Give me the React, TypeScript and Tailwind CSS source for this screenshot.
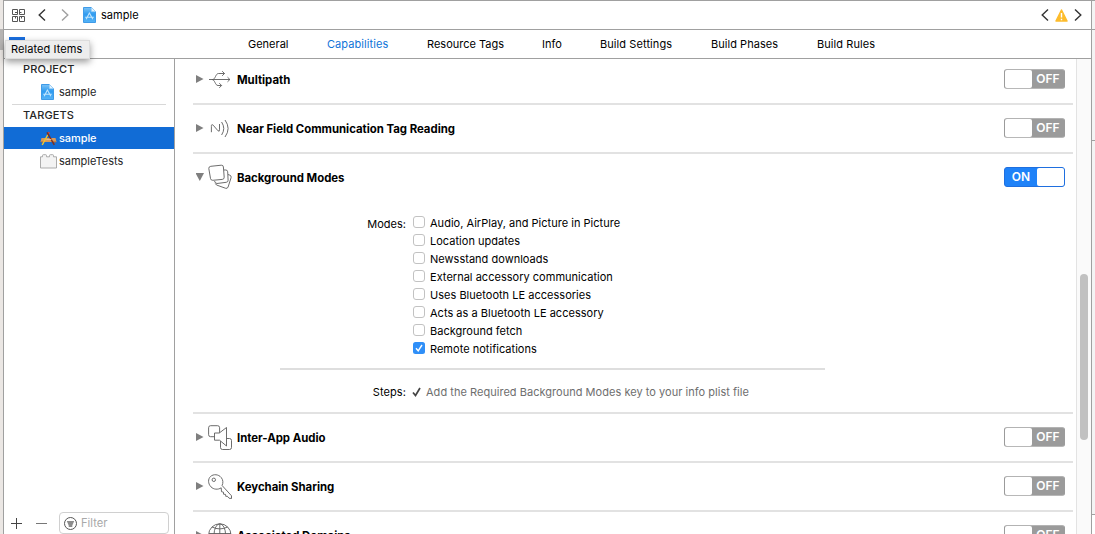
import type { ReactNode } from "react";

const tabs = [
  { label: "General", cls: "w-[79px]" },
  { label: "Capabilities", cls: "w-[100px] text-[#0f74d8] tracking-[0.07px]" },
  { label: "Resource Tags", cls: "w-[115px]" },
  { label: "Info", cls: "w-[58px]" },
  { label: "Build Settings", cls: "w-[111px] tracking-[0.08px]" },
  { label: "Build Phases", cls: "w-[106px] tracking-[0.04px]" },
  { label: "Build Rules", cls: "w-[97px] tracking-[0.08px]" },
];

const modes = [
  "Audio, AirPlay, and Picture in Picture",
  "Location updates",
  "Newsstand downloads",
  "External accessory communication",
  "Uses Bluetooth LE accessories",
  "Acts as a Bluetooth LE accessory",
  "Background fetch",
  "Remote notifications",
];

function DocIcon({ className }: { className?: string }) {
  return (
    <svg className={className} width="13" height="16" viewBox="0 0 13 16">
      <defs>
        <linearGradient id="doc" x1="0" y1="0" x2="0" y2="1">
          <stop offset="0" stopColor="#7cc3f6" />
          <stop offset=".45" stopColor="#2f9bf0" />
          <stop offset="1" stopColor="#56b4f7" />
        </linearGradient>
      </defs>
      <path d="M.5 .5h8l4 4v11H.5z" fill="url(#doc)" stroke="#3f9be8" />
      <path d="M8.500 .5l4 4h-4z" fill="#e3f3fe" stroke="#9fd2f8" strokeWidth=".6" />
      <path d="M6.500 5.800L3.200 12.300M6.300 5.800l3.500 6.500M2.200 10.300h8.600" stroke="#c2e5fd" strokeWidth="1.100" fill="none" />
    </svg>
  );
}

function AppIcon() {
  return (
    <svg width="17" height="15" viewBox="0 0 17 15">
      <path d="M1.500 7h14l1 4H.5z" fill="#d99a5b" />
      <path d="M1 11h3M12 11h4" stroke="#a8663a" strokeWidth="1" />
      <path d="M8.800 2L2.200 14" stroke="#f3c62d" strokeWidth="1.500" />
      <path d="M9.200 1L7.800 3.500" stroke="#d94434" strokeWidth="1.500" />
      <path d="M7 1.300l7.300 12.500" stroke="#7c2f23" strokeWidth="1.500" />
      <path d="M6.400 8.600h5" stroke="#f1c28e" strokeWidth="1" />
    </svg>
  );
}

function TestIcon() {
  return (
    <svg width="17" height="15" viewBox="0 0 17 15">
      <path d="M.5 2.800h2V1.500q0-.8.800-.8h2.400q.8 0 .8.800v1.300h3V1.500q0-.8.800-.8h2.400q.8 0 .8.800v1.300h3v11.200H.5z" fill="#f3f3f3" stroke="#a3a3a3" strokeWidth=".9" />
    </svg>
  );
}

function Glyph({ children }: { children: ReactNode }) {
  return (
    <svg className="ml-[4px] shrink-0" width="24" height="26" viewBox="0 0 24 26" fill="none" stroke="#5c5c5c" strokeWidth=".9" strokeLinejoin="round">
      {children}
    </svg>
  );
}

const glyphs = {
  multipath: (
    <path d="M1 13.500h21M19.500 11.200l2.400 2.300-2.400 2.300M4.500 13.500C7.500 13.500 7.500 7.500 10.500 7.500h6M14.200 5.200l2.300 2.300-2.300 2.300M4 13.500C7 13.500 7 19.500 10 19.500h3.500M11.300 17.200l2.300 2.300-2.300 2.300" />
  ),
  nfc: <path d="M3.400 17.200V11.500q-.2-2.800 1.800-1.300L10 15.800q1.600 1.200 1.500-1V9M13.600 7q4.300 6.500 0 13M17 5q6.200 8.500 0 17" />,
  modes: (
    <>
      <path d="M16 6h1.800q1.700 0 1.900 1.800l.4 8.500q0 1.800-1.800 2L9 19.500q-1.800 0-2.500-2.500" />
      <path d="M20 10.500l1.800.7q1.800.6 1.300 2.400l-3 9.400q-.7 1.800-2.400 1.300L8.500 21l-1.200-1.500" />
      <path d="M2.800 2.300L13.300 1.200q2-.2 2.100 1.800l.8 10.200q.1 2-1.900 2.200l-9.500.9q-2 .1-2.300-1.800L.8 4.500q-.1-2 2-2.200z" fill="#fff" />
    </>
  ),
  audio: (
    <>
      <rect x=".6" y="1.700" width="11" height="11" rx="2" />
      <rect x="12.500" y="14.500" width="11" height="11" rx="2" />
      <path d="M6.500 9h4.800l7.200-5.500v18.500l-7-5.800h-5z" fill="#fff" />
    </>
  ),
  key: (
    <>
      <path d="M13.200 14.800C10 17 5.500 16.500 3 13.900-.2 10.500-.1 6 2.500 3.500 5.500.8 10.500 1.200 13.200 4.500c2 2.500 2.100 5.300.9 8l9.400 10.300v2.700l-2.500-.3-1.700-2-1.500.2-.3-2-2-.2v-2l-2-.5z" />
      <circle cx="5.800" cy="6.800" r="1.700" />
    </>
  ),
  globe: (
    <>
      <circle cx="11.800" cy="13" r="11.200" />
      <ellipse cx="11.800" cy="13" rx="5.800" ry="11.200" />
      <path d="M11.800 2v22M1 11.500h22M4 5q7.800 3.800 15.600 0M3 19q9-3.500 18 0" />
    </>
  ),
};

function Switch({ on }: { on?: boolean }) {
  return on ? (
    <div className="flex h-[20px] w-[61px] rounded-[3px] border border-[#1f6fdf] bg-[#1f82f8]">
      <span className="w-[32px] text-center text-[12px] leading-[18px] font-semibold text-white">ON</span>
      <span className="flex-1 rounded-[2px] bg-white" />
    </div>
  ) : (
    <div className="flex h-[20px] w-[61px] rounded-[3px] border border-[#9b9b9b] border-t-[#b3b3b3] border-b-[#b8b8b8] bg-[#9b9b9b]">
      <span className="w-[27px] rounded-[2px] bg-white" />
      <span className="flex-1 text-center text-[12px] leading-[18px] font-semibold text-white">OFF</span>
    </div>
  );
}

function Row({ title, icon, open, on }: { title: string; icon: ReactNode; open?: boolean; on?: boolean }) {
  return (
    <div className="flex h-[47px] shrink-0 items-center pr-[8px] pb-px pl-[3px]">
      <svg width="8" height="10" viewBox="0 0 8 10" className="shrink-0">
        <path d={open ? "M-.5 1h8.500L3.800 9z" : "M0 1l7.500 4L0 9z"} fill="#7f7f7f" />
      </svg>
      <Glyph>{icon}</Glyph>
      <span className="ml-[5px] flex-1 pt-px text-[11.400px] leading-[18px] font-bold tracking-[-0.020px]">{title}</span>
      <Switch on={on} />
    </div>
  );
}

function Rule() {
  return <div className="h-[2px] shrink-0 bg-[#e2e2e2]" />;
}

export default function App() {
  return (
    <div className="relative flex h-[534px] w-[1095px] overflow-hidden bg-white font-['Inter','Liberation_Sans',sans-serif] text-[11px] whitespace-nowrap text-black">
      <div className="flex w-[3px] shrink-0 flex-col bg-[#ebe7e4]">
        <div className="mt-[29px] h-[21px] bg-[#b5b3b2]" />
      </div>
      <div className="flex w-[1089px] shrink-0 flex-col border-x border-t border-[#a0a0a0]">
        <header className="flex h-[29px] shrink-0 items-center border-b border-[#a0a0a0] pr-[9px] pl-[8px]">
          <svg width="13" height="13" viewBox="0 0 13 13" fill="none" stroke="#555">
            <path d="M.5 .5h5v5h-5zM7.500 .5h5v5h-5zM.5 7.500h5v5h-5zM7.500 7.500h5v5h-5zM3 3.500h2.500M7.500 3.500h2M3.500 9.500v-2M9.500 9.500v-2" />
          </svg>
          <svg className="ml-[13px]" width="8" height="12" viewBox="0 0 8 12" fill="none" stroke="#333" strokeWidth="1.400"><path d="M7 .5L1.200 6 7 11.500" /></svg>
          <svg className="ml-[15px]" width="8" height="12" viewBox="0 0 8 12" fill="none" stroke="#a0a0a0" strokeWidth="1.400"><path d="M1 .5L6.800 6 1 11.500" /></svg>
          <DocIcon className="ml-[14px]" />
          <span className="ml-[5px] flex-1 pt-px text-[11px] tracking-[0.050px]">sample</span>
          <svg width="8" height="12" viewBox="0 0 8 12" fill="none" stroke="#333" strokeWidth="1.400"><path d="M7 .5L1.200 6 7 11.500" /></svg>
          <svg className="mx-[6px]" width="13" height="13" viewBox="0 0 13 13">
            <path d="M6.500 1l5.500 11H1z" fill="#fdbc2c" stroke="#fdbc2c" strokeWidth="1.500" strokeLinejoin="round" />
            <path d="M6.500 4v4.500M6.500 9.700v1.500" stroke="#fff" strokeWidth="1.400" />
          </svg>
          <svg width="8" height="12" viewBox="0 0 8 12" fill="none" stroke="#333" strokeWidth="1.400"><path d="M1 .5L6.800 6 1 11.500" /></svg>
        </header>
        <nav className="flex h-[29px] shrink-0 items-center border-b border-[#a0a0a0] pl-[244px]">
          {tabs.map((t) => (
            <span key={t.label} className={t.cls}>{t.label}</span>
          ))}
        </nav>
        <div className="flex min-h-0 flex-1">
          <aside className="flex w-[171px] shrink-0 flex-col border-r border-[#a0a0a0] text-[#262626]">
            <div className="flex h-[21px] items-center pl-[19px] font-medium tracking-[0.100px]">PROJECT</div>
            <div className="flex h-[24px] items-center pl-[37px]"><DocIcon /><span className="ml-[5px]">sample</span></div>
            <div className="mx-[8px] h-px bg-[#d8d8d8]" />
            <div className="flex h-[22px] items-center pb-[2px] pl-[19px] font-medium tracking-[0.100px]">TARGETS</div>
            <div className="flex h-[22px] items-center bg-[#116cd6] pl-[36px] font-medium text-white"><AppIcon /><span className="ml-[2px] tracking-[-0.080px]">sample</span></div>
            <div className="flex h-[24px] items-center pl-[36px]"><TestIcon /><span className="ml-[2px]">sampleTests</span></div>
            <div className="mt-auto flex h-[22px] items-center pl-[7px]">
              <svg width="11" height="11" viewBox="0 0 11 11" stroke="#444"><path d="M0 5.500h11M5.500 0v11" /></svg>
              <svg className="ml-[14px]" width="11" height="11" viewBox="0 0 11 11" stroke="#777"><path d="M0 5.500h11" /></svg>
              <div className="ml-[12px] flex h-[22px] w-[110px] items-center rounded-[4px] border border-[#d0d0d0] pl-[4px] text-[#a9a9a9]">
                <svg width="13" height="13" viewBox="0 0 13 13" fill="none" stroke="#555">
                  <circle cx="6.500" cy="6.500" r="6" />
                  <path d="M2.800 4h7.400L8.300 8.500V10H4.700V8.500z" fill="#8c8c8c" stroke="none" />
                </svg>
                <span className="ml-[4px] pt-px text-[11.200px]">Filter</span>
              </div>
            </div>
          </aside>
          <main className="flex min-w-0 flex-1 flex-col overflow-hidden pr-[3px] pl-[18px]">
            <div className="-mt-[3px] flex flex-col">
              <Row title="Multipath" icon={glyphs.multipath} />
              <Rule />
              <Row title="Near Field Communication Tag Reading" icon={glyphs.nfc} />
              <Rule />
              <Row title="Background Modes" icon={glyphs.modes} open on />
              <section className="flex h-[211px] shrink-0 flex-col tracking-[0.020px]">
                <div className="flex pt-[12px]">
                  <div className="w-[213px] pt-[2px] text-right leading-[18px]">Modes:</div>
                  <ul className="ml-[7px]">
                    {modes.map((m, i) => (
                      <li key={m} className="flex h-[18px] items-center">
                        {i === 7 ? (
                          <svg width="12" height="12" viewBox="0 0 12 12">
                            <rect width="12" height="12" rx="2.500" fill="#2f8ff8" />
                            <path d="M3 6.300l2.200 2.500L9 3" fill="none" stroke="#fff" strokeWidth="1.400" />
                          </svg>
                        ) : (
                          <span className="size-[12px] rounded-[3px] border border-[#c2c2c2]" />
                        )}
                        <span className="ml-[5px] pt-[2px] leading-[16px]">{m}</span>
                      </li>
                    ))}
                  </ul>
                </div>
                <div className="mt-[11px] ml-[87px] h-[2px] w-[545px] bg-[#dedede]" />
                <div className="mt-[13px] flex items-center leading-[18px]">
                  <div className="w-[213px] text-right tracking-[0.100px]">Steps:</div>
                  <svg className="ml-[6px]" width="9" height="10" viewBox="0 0 9 10"><path d="M1 5.500l2.500 3L8 1" fill="none" stroke="#444" strokeWidth="1.700" /></svg>
                  <span className="ml-[5px] tracking-[0.030px] text-[#6e6e6e]">Add the Required Background Modes key to your info plist file</span>
                </div>
              </section>
              <Rule />
              <Row title="Inter-App Audio" icon={glyphs.audio} />
              <Rule />
              <Row title="Keychain Sharing" icon={glyphs.key} />
              <Rule />
              <Row title="Associated Domains" icon={glyphs.globe} />
            </div>
          </main>
          <div className="w-[15px] shrink-0 border-l border-[#e3e3e3] bg-[#fafafa] pt-[215px] pl-[3px]">
            <div className="h-[166px] w-[8px] rounded-full bg-[#c1c1c1]" />
          </div>
        </div>
      </div>
      <div className="flex flex-1 flex-col border-t border-[#a0a0a0] bg-[#f4f4f4]">
        <div className="h-[29px] border-b border-[#a0a0a0]" />
        <div className="h-[111px] border-b border-[#a0a0a0]" />
        <div className="h-[374px] border-b border-[#a0a0a0]" />
        <div className="flex-1 bg-white" />
      </div>
      <div className="absolute top-[37px] left-[9px] h-[8px] w-[16px] bg-[#1a6fe0]" />
      <div className="absolute top-[40px] left-[5px] flex h-[19px] w-[85px] items-center border border-[#dcdcdc] bg-[#ededed] pl-[5px] tracking-[0.080px] shadow-[0_3px_7px_rgba(0,0,0,0.4)]">Related Items</div>
    </div>
  );
}
